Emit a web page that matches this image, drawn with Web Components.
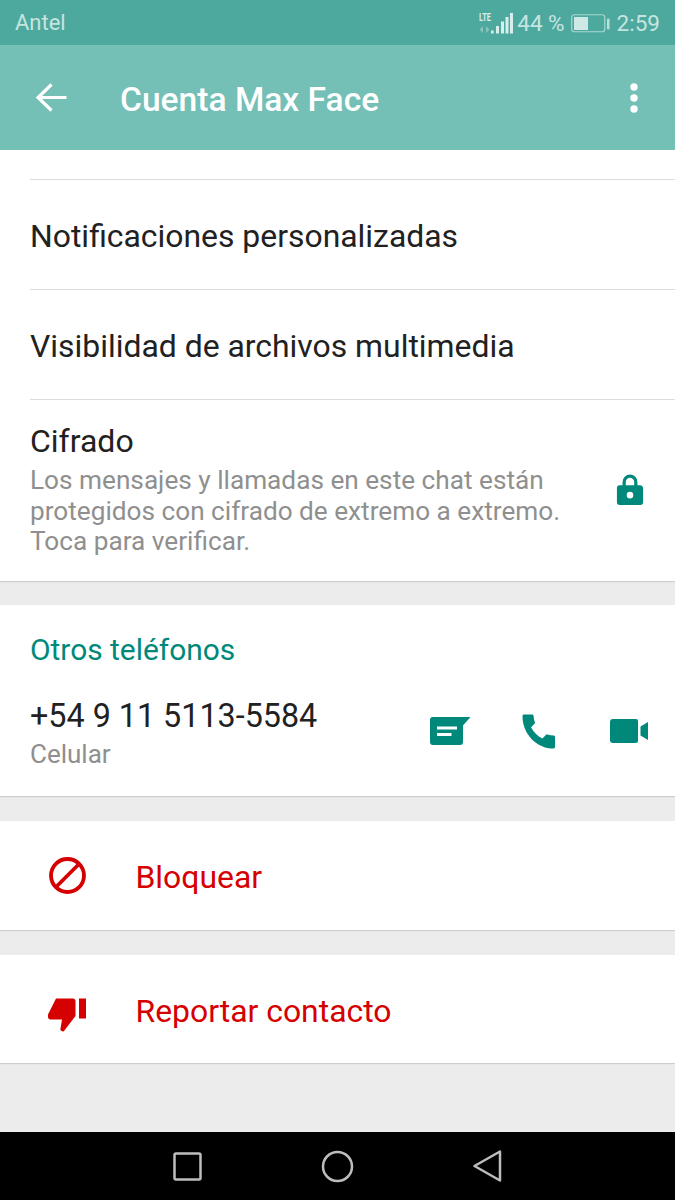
<!DOCTYPE html>
<html lang="es">
<head>
<meta charset="utf-8">
<title>Cuenta Max Face</title>
<style>
  html, body { margin: 0; padding: 0; background: #ececec; }
  body { width: 675px; height: 1200px; overflow: hidden; font-family: Roboto, "Liberation Sans", sans-serif; display: flex; flex-direction: column; }
  main { flex: 1; display: flex; flex-direction: column; min-height: 0; }
</style>
</head>
<body>
<status-bar></status-bar>
<app-bar title="Cuenta Max Face"></app-bar>
<main>
  <info-card style="height:431px;padding-top:29px">
    <plain-row>Notificaciones personalizadas</plain-row>
    <plain-row>Visibilidad de archivos multimedia</plain-row>
    <cipher-row></cipher-row>
  </info-card>
  <info-card style="height:191px;margin-top:24px">
    <phone-block></phone-block>
  </info-card>
  <info-card style="height:109px;margin-top:25px">
    <danger-row label="Bloquear" icon="block"></danger-row>
  </info-card>
  <info-card style="height:108px;margin-top:25px">
    <danger-row label="Reportar contacto" icon="thumb"></danger-row>
  </info-card>
</main>
<nav-bar></nav-bar>

<script>
  // Small helper: every element renders a fixed template into an open shadow root.
  function shadow(el, html) {
    el.attachShadow({ mode: 'open' }).innerHTML = html;
  }

  customElements.define('status-bar', class extends HTMLElement {
    connectedCallback() {
      shadow(this, `
        <style>
          :host { display:flex; align-items:center; justify-content:space-between; height:45px; flex:none;
                  background:#4da89e; color:#c6e5e1; font-size:22.5px; padding:0 15px; box-sizing:border-box; }
          .right { display:flex; align-items:center; }
          svg { display:block; }
          .carrier { font-size:22px; }
          .pct { margin-left:4px; margin-right:6px; }
          .time { margin-left:7px; }
        </style>
        <span class="carrier">Antel</span>
        <div class="right">
          <svg width="36" height="24" viewBox="0 0 36 24">
            <text x="2" y="10" font-family="Roboto, sans-serif" font-size="11" font-weight="700" fill="#d7eeeb" textLength="12" lengthAdjust="spacingAndGlyphs">LTE</text>
            <path d="M6 15v7l-3.500-3.500zM9 15v7l3.500-3.500z" fill="#84c4bc"/>
            <g fill="#d7eeeb">
              <rect x="14" y="19.500" width="2.600" height="3"/>
              <rect x="19" y="15" width="3" height="7.500"/>
              <rect x="24" y="10.500" width="3" height="12"/>
              <rect x="28.500" y="6" width="3" height="16.500"/>
              <rect x="33" y="2" width="3" height="20.500"/>
            </g>
          </svg>
          <span class="pct">44 %</span>
          <svg width="39" height="20" viewBox="0 0 39 20">
            <rect x=".75" y="1.750" width="33" height="17" rx="2.500" fill="none" stroke="#a9d8d2" stroke-width="1.200"/>
            <rect x="3" y="4" width="14" height="13" fill="#cfe8e5"/>
            <rect x="36" y="5.500" width="2.500" height="11" rx="1" fill="#b9e0db"/>
          </svg>
          <span class="time">2:59</span>
        </div>`);
    }
  });

  customElements.define('app-bar', class extends HTMLElement {
    connectedCallback() {
      shadow(this, `
        <style>
          :host { display:flex; align-items:center; height:105px; flex:none; background:#74bfb6; color:#fff; box-sizing:border-box; padding:0 36.500px 0 35px; }
          h1 { margin:0 0 0 53px; padding-top:4px; font-size:33.600px; font-weight:500; flex:1; }
          svg { display:block; }
        </style>
        <svg width="32" height="32" viewBox="0 0 32 32"><path d="M31.500 15.500H3M16.500 2.500L3 15.500l13.500 13" fill="none" stroke="#fff" stroke-width="3.200"/></svg>
        <h1>${this.getAttribute('title')}</h1>
        <svg width="10" height="34" viewBox="0 0 10 34"><circle cx="5" cy="6" r="3.700" fill="#fff"/><circle cx="5" cy="17" r="3.700" fill="#fff"/><circle cx="5" cy="28" r="3.700" fill="#fff"/></svg>`);
    }
  });

  customElements.define('info-card', class extends HTMLElement {
    connectedCallback() {
      shadow(this, `
        <style>
          :host { display:block; flex:none; background:#fff; box-sizing:border-box; box-shadow:0 1px 1px rgba(0,0,0,.13); }
        </style>
        <slot></slot>`);
    }
  });

  customElements.define('plain-row', class extends HTMLElement {
    connectedCallback() {
      shadow(this, `
        <style>
          :host { display:block; margin-left:30px; border-top:1px solid #dcdcdc; height:109px; line-height:112px;
                  font-size:31.900px; color:#212121; white-space:nowrap; }
        </style>
        <slot></slot>`);
    }
  });

  customElements.define('cipher-row', class extends HTMLElement {
    connectedCallback() {
      shadow(this, `
        <style>
          :host { display:flex; align-items:center; margin-left:30px; border-top:1px solid #dcdcdc; height:181px; box-sizing:border-box; }
          .text { flex:1; }
          .name { font-size:32px; color:#212121; line-height:36px; margin-bottom:6px; }
          .desc { font-size:26.200px; color:#8f8f8f; line-height:30.500px; white-space:nowrap; }
          svg { display:block; margin:0 31px 0 0; }
        </style>
        <div class="text">
          <div class="name">Cifrado</div>
          <div class="desc">Los mensajes y llamadas en este chat están<br>protegidos con cifrado de extremo a extremo.<br>Toca para verificar.</div>
        </div>
        <svg width="28" height="34" viewBox="0 0 30 36"><path fill="#00897b" fill-rule="evenodd" d="M7 13V9.500a8 8 0 0 1 16 0V13h2.500A3 3 0 0 1 29 16v15a3 3 0 0 1-3 3H4a3 3 0 0 1-3-3V16a3 3 0 0 1 3-3zM10.500 13h9V9.500a4.500 4.500 0 0 0-9 0zM15 20a3.500 3.500 0 1 0 0 7 3.500 3.500 0 0 0 0-7z"/></svg>`);
    }
  });

  customElements.define('phone-block', class extends HTMLElement {
    connectedCallback() {
      shadow(this, `
        <style>
          :host { display:block; padding:27px 0 0 30px; }
          h2 { margin:0; font-size:29.900px; font-weight:400; color:#00897b; line-height:36px; }
          .row { display:flex; align-items:center; margin-top:27px; }
          .num { font-size:32.300px; color:#212121; line-height:42px; }
          .kind { font-size:26px; color:#8f8f8f; line-height:36px; margin-top:-1px; }
          .icons { display:flex; align-items:center; gap:53px; padding-right:26px; margin-top:-5px; }
          .msg { margin-right:-2px; }
          svg { display:block; }
        </style>
        <h2>Otros teléfonos</h2>
        <div class="row">
          <div style="flex:1">
            <div class="num">+54 9 11 5113-5584</div>
            <div class="kind">Celular</div>
          </div>
          <div class="icons">
            <svg class="msg" width="42" height="30" viewBox="0 0 42 30"><path fill="#00897b" fill-rule="evenodd" d="M4 1h37.500L34 9.500V26a3 3 0 0 1-3 3H4a3 3 0 0 1-3-3V4a3 3 0 0 1 3-3zM8 10.500v3h20v-3zM8 17v3h14.500v-3z"/></svg>
            <svg width="35" height="35" viewBox="0 0 36 36"><path fill="#00897b" d="M2 .5h8.500c.8 0 1.500.7 1.500 1.500 0 2.500.5 4.500 1.300 6.400.2.600 0 1.200-.4 1.600l-3.600 3.600c2.600 5 6.700 9 11.700 11.600l3.500-3.600c.5-.5 1.200-.6 1.700-.4 1.900.6 4 1 6.300 1 .8 0 1.500.7 1.500 1.500V34c0 .8-.7 1.500-1.500 1.500C15.200 35.500.5 20.800.5 2c0-.8.700-1.500 1.500-1.500z"/></svg>
            <svg width="39" height="24" viewBox="0 0 39 24"><path fill="#00897b" d="M3 0h23a2 2 0 0 1 2 2v20a2 2 0 0 1-2 2H3a3 3 0 0 1-3-3V3a3 3 0 0 1 3-3zM30.500 7.500L38 3v18l-7.500-4.500z"/></svg>
          </div>
        </div>`);
    }
  });

  customElements.define('danger-row', class extends HTMLElement {
    connectedCallback() {
      const icons = {
        block: `<svg width="38" height="38" viewBox="0 0 38 38"><circle cx="19.500" cy="18.500" r="16.500" fill="none" stroke="#d50000" stroke-width="3.800"/><path d="M8 30l23-23" stroke="#d50000" stroke-width="3.800"/></svg>`,
        thumb: `<svg style="margin-top:12px" width="38" height="34" viewBox="0 0 38 34"><path fill="#d50000" d="M8 .5H25c1.200 0 2.500 1 2.500 2.500V18L16 33c-.5.700-2 .5-3-.5-.8-.8-.7-1.500-.4-2.500L14 21.500H2.500C1 21.500 0 20.500 0 19v-2.500z"/><rect x="31" y=".5" width="7" height="20" fill="#d50000"/></svg>`
      };
      shadow(this, `
        <style>
          :host { display:flex; align-items:center; height:100%; padding:0 0 0 48px; color:#d50000; font-size:31.900px; }
          .ic { width:87.500px; flex:none; }
          span { padding-top:3px; }
          svg { display:block; }
        </style>
        <div class="ic">${icons[this.getAttribute('icon')]}</div>
        <span>${this.getAttribute('label')}</span>`);
    }
  });

  customElements.define('nav-bar', class extends HTMLElement {
    connectedCallback() {
      shadow(this, `
        <style>
          :host { display:block; height:68px; flex:none; background:#000; }
          svg { display:block; }
        </style>
        <svg width="675" height="68" viewBox="0 0 675 68" fill="none" stroke="#bdbdbd" stroke-width="2.500" stroke-linejoin="round">
          <rect x="174.500" y="21.500" width="26" height="26" rx="1.500"/>
          <circle cx="337.500" cy="34.500" r="14.500"/>
          <path d="M500 19.500v29L474.500 34z"/>
        </svg>`);
    }
  });
</script>
</body>
</html>
